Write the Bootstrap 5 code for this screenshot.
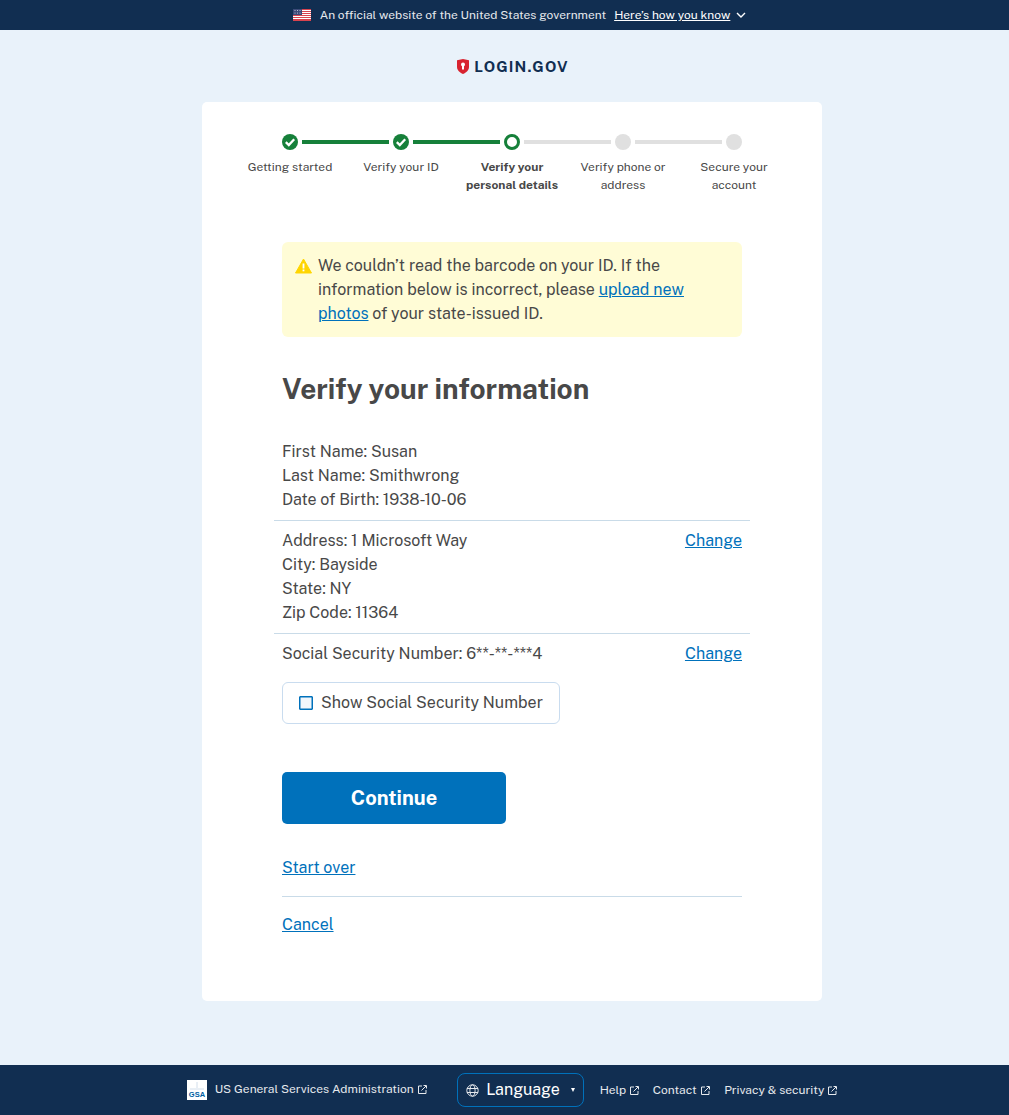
<!DOCTYPE html>
<html lang="en"><head><meta charset="utf-8"><title>Verify your information</title>
<link rel="stylesheet" href="https://cdn.jsdelivr.net/npm/bootstrap@5.3.0/dist/css/bootstrap.min.css">
<style>
html{overflow:hidden}
body{width:1024px;background:#e9f2fa;font-family:"Public Sans","Inter","Noto Sans",sans-serif;color:#484848;font-size:16px;line-height:24px;min-height:1115px}
a{color:#0071bb}
.topbar{background:#112e51;color:#e6e9ed;height:30px;font-size:12px;padding-left:15px}
.topbar a{color:#fff;margin-left:8px}
.flagico{margin-right:9px}
.chev{margin-left:6px}
.logo-row{height:72px;color:#112e51;font-weight:700;font-size:15px;letter-spacing:1.2px;gap:5px;padding-top:1px;padding-left:2px}
.panel{width:620px;height:899px;background:#fff;border-radius:5px;margin:0 auto 64px;padding:30px 80px 0}
.stepper{margin:0 -47.5px;height:110px}
.stp{width:111px;text-align:center;position:relative;font-size:12px;line-height:18px;padding-top:26px}
.stp::before{content:"";position:absolute;top:8px;left:67.5px;width:87px;height:4px;background:#e0e0e0}
.stp.done::before{background:#16803a}
.stp:last-child::before{display:none}
.dot{position:absolute;top:2px;left:47.5px;width:16px;height:16px;border-radius:50%;background:#e0e0e0;display:block}
.dot.cur{background:#fff;border:3px solid #16803a}
.dot.ok{background:#16803a}
.dot svg{display:block}
.alert-y{background:#fffcd6;border-radius:6px;padding:12px 36px;height:95px;position:relative;margin-bottom:34px}
.alert-y svg{position:absolute;left:13px;top:16px}
h1.ttl{font-size:28px;line-height:36px;font-weight:700;margin:0 0 25px}
.inf{margin:0 -8px;padding:8px}
.inf+.inf{border-top:1px solid #c9dbe8}
.chk{width:278px;height:42px;border:1px solid #c9dcef;border-radius:6px;margin-top:8px;gap:8px;padding-left:16px}
.box{width:14px;height:14px;background:#f1f6fb;border:1px solid #0071bb;border-radius:1px;box-shadow:inset 0 0 0 .5px #0071bb}
.go{width:224px;height:52px;background:#0071bb;color:#fff;font-weight:700;font-size:20px;border-radius:5px;border:0;margin-top:48px}
.sep{border-bottom:1px solid #c9dbe8}
.foot{background:#112e51;color:#e6e9ed;height:50px;font-size:12px;gap:14.5px}
.foot a{color:#e6e9ed;text-decoration:none}
.foot a,.gsa{display:flex;align-items:center;gap:4px}
.foot a.helpl{margin-right:-1px}
.gsa{margin-right:16px;margin-bottom:2px}
.gsa>svg:first-child{margin-right:4px;margin-top:2px}
.langbtn{width:127px;height:34px;border:1px solid #0071bb;border-radius:8px;font-size:16px;padding-left:8px;gap:7px;color:#fff;flex:none;margin-right:1px}
.langbtn svg{flex:none}
.caret{width:0;height:0;border:solid transparent;border-width:4px 2.5px 0;border-top-color:#fff;margin-left:4px}
</style></head><body>
<div class="topbar d-flex align-items-center justify-content-center">
<svg class="flagico" width="18" height="12" viewBox="0 0 18 12"><rect width="18" height="12" fill="#fff"/><g fill="#d8434e"><rect width="18" height="1"/><rect y="2" width="18" height="1"/><rect y="4" width="18" height="1"/><rect y="6" width="18" height="1"/><rect y="8" width="18" height="1"/><rect y="10" width="18" height="2"/></g><rect width="9" height="6" fill="#3c4a78"/><g fill="#dfe3ee"><circle cx="2" cy="1.5" r=".5"/><circle cx="4.5" cy="1.5" r=".5"/><circle cx="7" cy="1.5" r=".5"/><circle cx="2" cy="4" r=".5"/><circle cx="4.5" cy="4" r=".5"/><circle cx="7" cy="4" r=".5"/></g></svg>
<span>An official website of the United States government</span><a href="#">Here’s how you know</a>
<svg class="chev" width="10" height="8" viewBox="0 0 10 8"><path d="M1 2l4 4 4-4" fill="none" stroke="#fff" stroke-width="1.4"/></svg></div>
<div class="logo-row d-flex align-items-center justify-content-center">
<svg width="12" height="15" viewBox="0 0 12 15"><path d="M0 1.2 6 0l6 1.2V8c0 3.4-2.8 5.6-6 7-3.200-1.400-6-3.600-6-7z" fill="#d8232f"/><circle cx="6" cy="5.500" r="2" fill="#fff"/><rect x="5" y="5.500" width="2" height="5" fill="#fff"/></svg>
<span>LOGIN.GOV</span></div>
<main class="panel">
<div class="stepper d-flex">
<div class="stp done"><span class="dot ok"><svg width="16" height="16" viewBox="0 0 16 16"><path d="M3.800 8.200l3 2.900 5.400-5.800" fill="none" stroke="#fff" stroke-width="2.300"/></svg></span>Getting started</div>
<div class="stp done"><span class="dot ok"><svg width="16" height="16" viewBox="0 0 16 16"><path d="M3.800 8.200l3 2.900 5.400-5.800" fill="none" stroke="#fff" stroke-width="2.300"/></svg></span>Verify your ID</div>
<div class="stp"><span class="dot cur"></span><b>Verify your personal details</b></div>
<div class="stp"><span class="dot"></span>Verify phone or address</div>
<div class="stp"><span class="dot"></span>Secure your account</div>
</div>
<div class="alert-y">
<svg width="17" height="16" viewBox="0 0 17 16"><path d="M8.500 1 16.500 15H.5z" fill="#ffd500" stroke="#ffd500" stroke-linejoin="round"/><rect x="7.600" y="5.500" width="1.800" height="5" fill="#fff"/><rect x="7.600" y="11.500" width="1.800" height="1.800" fill="#fff"/></svg>
We couldn’t read the barcode on your ID. If the information below is incorrect, please <a href="#">upload new photos</a> of your state-issued ID.</div>
<h1 class="ttl">Verify your information</h1>
<div class="inf">First Name: Susan<br>Last Name: Smithwrong<br>Date of Birth: 1938-10-06</div>
<div class="inf d-flex justify-content-between"><div>Address: 1 Microsoft Way<br>City: Bayside<br>State: NY<br>Zip Code: 11364</div><a href="#">Change</a></div>
<div class="inf d-flex justify-content-between"><div>Social Security Number: 6**-**-***4</div><a href="#">Change</a></div>
<div class="chk d-flex align-items-center"><span class="box"></span>Show Social Security Number</div>
<button class="go d-block">Continue</button>
<div class="mt-4 pt-2 pb-3 sep"><a href="#">Start over</a></div>
<div class="mt-3"><a href="#">Cancel</a></div>
</main>
<footer class="foot d-flex align-items-center justify-content-center">
<span class="gsa"><svg width="20" height="20" viewBox="0 0 20 20"><rect width="20" height="20" fill="#fff"/><path d="M3 9h14M10 2v6" stroke="#c7d6e6" stroke-width=".8"/><text x="10" y="17" font-size="7.500" font-weight="700" text-anchor="middle" fill="#005ea2" font-family="Liberation Sans">GSA</text></svg>US General Services Administration
<svg width="9" height="9" viewBox="0 0 9 9"><path d="M4 1H.5v7.500H8V5M3.500 5.500 8 1M5.500.5h3v3" fill="none" stroke="#e6e9ed"/></svg></span>
<span class="langbtn d-flex align-items-center"><svg width="13" height="13" viewBox="0 0 13 13"><g fill="none" stroke="#e6e9ed"><circle cx="6.500" cy="6.500" r="5.700"/><ellipse cx="6.500" cy="6.500" rx="2.600" ry="5.700"/><path d="M1 4.500h11M1 8.500h11"/></g></svg>Language<span class="caret"></span></span>
<a class="helpl" href="#">Help <svg width="9" height="9" viewBox="0 0 9 9"><path d="M4 1H.5v7.500H8V5M3.500 5.500 8 1M5.500.5h3v3" fill="none" stroke="#e6e9ed"/></svg></a>
<a href="#">Contact <svg width="9" height="9" viewBox="0 0 9 9"><path d="M4 1H.5v7.500H8V5M3.500 5.500 8 1M5.500.5h3v3" fill="none" stroke="#e6e9ed"/></svg></a>
<a href="#">Privacy &amp; security <svg width="9" height="9" viewBox="0 0 9 9"><path d="M4 1H.5v7.500H8V5M3.500 5.500 8 1M5.500.5h3v3" fill="none" stroke="#e6e9ed"/></svg></a>
</footer>
</body></html>
